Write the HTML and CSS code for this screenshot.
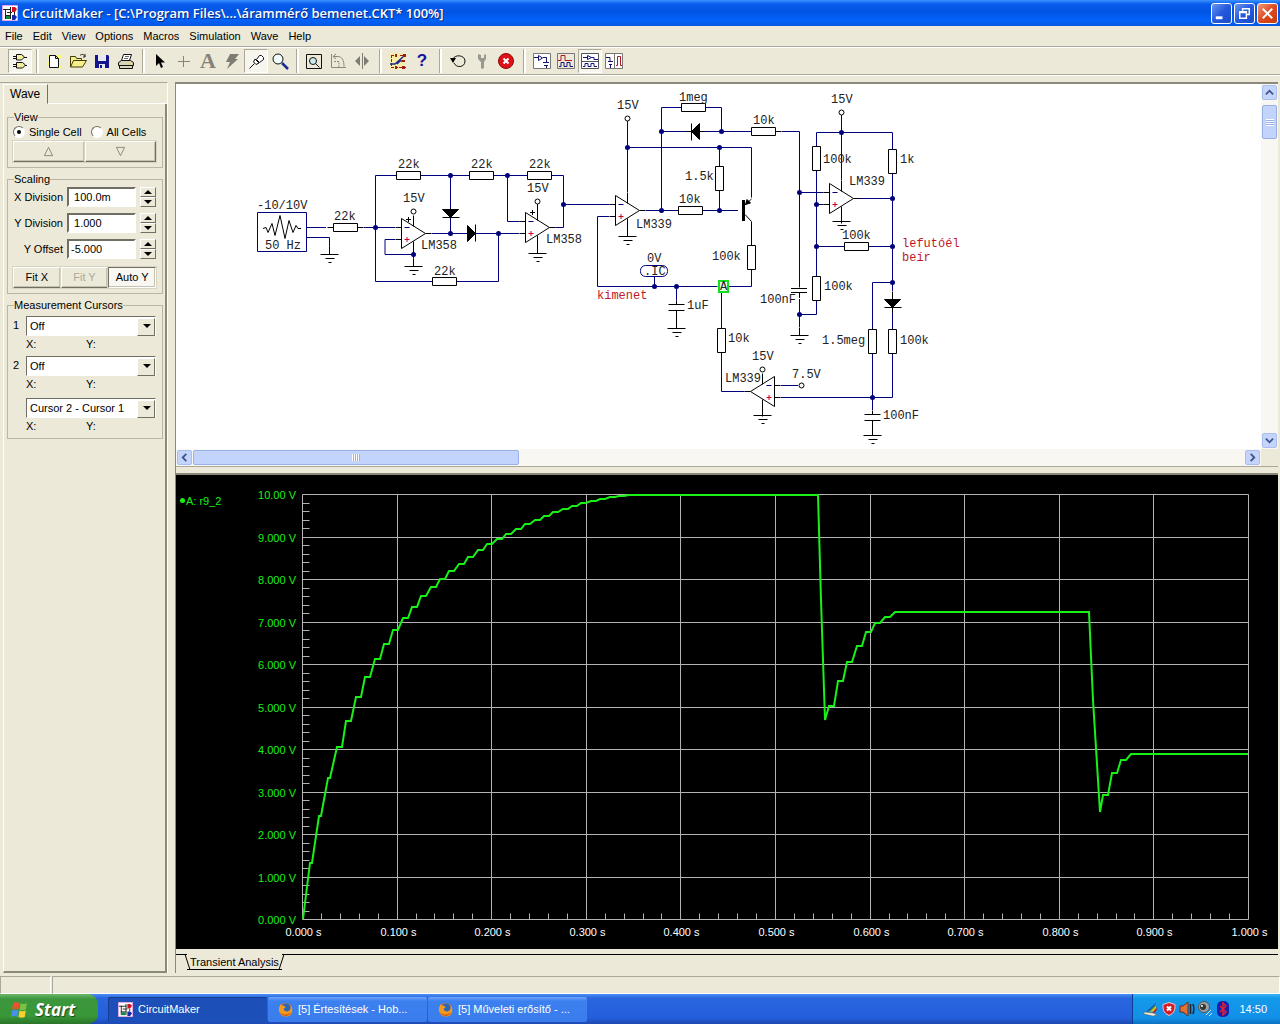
FILE: index.html
```html
<!DOCTYPE html>
<html lang="en">

<head>
  <meta charset="UTF-8">
  <meta name="viewport" content="width=device-width, initial-scale=1.0">
  <title>CircuitMaker</title>
  <link rel="stylesheet" href="styles.css">
</head>

<body>
  <!-- shared shapes -->
  <svg class="defs" aria-hidden="true">
    <symbol id="app" viewBox="0 0 16 16">
      <path fill="#fff" stroke="#e7a9e4" d="M.5 .5h15v15H.5z" />
      <path fill="none" stroke="#222" d="M1 4.500h8M3.500 4v10M3 10.500h6M8.500 2v12M5 7.500h5M12.500 7v3" />
      <path fill="#d01020" d="M10 2h3l2 2-2 3h-3z" />
      <path fill="#1828a8" d="M10 10h3l2 2-2 3h-3z" />
      <path fill="#108838" d="M4 11h4v3H4z" />
    </symbol>
    <symbol id="firefox" viewBox="0 0 16 16">
      <circle cx="8" cy="8" r="7" fill="#e8741a" />
      <circle cx="8.500" cy="6.500" r="5" fill="#2d67b5" />
      <path fill="#f39a1e" d="M1 6l2-4 1 2c2-1 3 0 4 2L6 7c0 3 4 4 6 2 2-1 2-4 1-6 3 3 3 8 0 11-4 3-11 1-12-5z" />
      <path fill="#c8401a" d="M2 10c2 4 8 5 12 1-2 5-10 5-12-1z" />
    </symbol>
    <symbol id="up" viewBox="0 0 10 10"><path fill="none" stroke="#3c5588" stroke-width="2" d="M1 7l4-4 4 4" /></symbol>
    <symbol id="down" viewBox="0 0 10 10"><path fill="none" stroke="#3c5588" stroke-width="2" d="M1 3l4 4 4-4" /></symbol>
    <symbol id="left" viewBox="0 0 10 10"><path fill="none" stroke="#3c5588" stroke-width="2" d="M7 1L3 5l4 4" /></symbol>
    <symbol id="right" viewBox="0 0 10 10"><path fill="none" stroke="#3c5588" stroke-width="2" d="M3 1l4 4-4 4" /></symbol>
    <!-- circuit parts -->
    <g id="res"><path d="M-18 0h36" /><path fill="#fff" d="M-12-4h24v8h-24z" /></g>
    <g id="gnd"><path d="M0-8v8M-9 0h18M-4 4h9M-1 8h3" /></g>
    <g id="cap"><path d="M0-7v4M-8-3h16M-8 3h16M0 3v7" /></g>
    <g id="diode"><path d="M0-12v24M-8 4h17" /><path fill="#000" d="M-8-4h16L0 4z" /></g>
    <g id="pin"><circle r="2.500" fill="#fff" /></g>
    <g id="amp">
      <path fill="#fff" d="M0-15L24 0 0 15z" />
      <path d="M-6-6h6M-6 6h6M24 0h6M12-18v11M12 8v17" />
      <path stroke="#00007c" d="M3-6h5" />
      <path stroke="#d00018" d="M3 6h5M5.500 3.500v5" />
    </g>
  </svg>

  <header class="titlebar">
    <svg class="app-icon"><use href="#app" /></svg>
    <h1>CircuitMaker - [C:\Program Files\...\árammérő bemenet.CKT* 100%]</h1>
    <button class="win-btn" aria-label="Minimize"><svg viewBox="0 0 20 20"><path fill="#fff" d="M4 13h7v3H4z" /></svg></button>
    <button class="win-btn" aria-label="Restore"><svg viewBox="0 0 20 20"><path fill="none" stroke="#fff" stroke-width="1.500" d="M8 7V5h7v6h-3M5 8h7v7H5zM5 9h7" /></svg></button>
    <button class="win-btn close" aria-label="Close"><svg viewBox="0 0 20 20"><path stroke="#fff" stroke-width="2" d="M5 5l10 10M15 5L5 15" /></svg></button>
  </header>

  <nav class="menu">
    <button>File</button>
    <button>Edit</button>
    <button>View</button>
    <button>Options</button>
    <button>Macros</button>
    <button>Simulation</button>
    <button>Wave</button>
    <button>Help</button>
  </nav>

  <div class="toolbar">
    <button class="pressed" aria-label="Parts panel"><svg viewBox="0 0 18 18"><path fill="#f4f0a0" stroke="#111" d="M5.500 2.500h5l3 2.500-3 3h-5zM5.500 10.500h6l3 2.500-3 3h-6z" /><path stroke="#111" d="M2 4.500h3M2 6.500h3M13 5.500h3M2 12.500h3M2 14.500h3M14 13.500h2" /></svg></button>
    <span class="sep narrow"></span>
    <button aria-label="New"><svg viewBox="0 0 18 18"><path fill="#ff6" d="M3 3h3v2H3zM13 3h3v3h-3zM2 10h2v3H2zM13 14h3v2h-3z" /><path fill="#fff" stroke="#111" d="M4.500 3.500h6l3 3v9h-9zM10.500 3.500v3h3" /></svg></button>
    <button aria-label="Open"><svg viewBox="0 0 18 18"><path fill="#f5ef8c" stroke="#443b00" d="M1.500 15V4.500h5l1 2h5v2M1.500 15l3-6.500h13l-4 6.500z" /><path fill="none" stroke="#222" d="M11 3.500c2-2 4-1 5 1M16 2v3h-2" /></svg></button>
    <button aria-label="Save"><svg viewBox="0 0 18 18"><path fill="#14148c" d="M3 3h12l1 1v12H2V3z" /><path fill="#e8e8f0" d="M5 3h8v6H5zM6 12h6v4H6z" /><path fill="#14148c" d="M7 13h2v3H7z" /></svg></button>
    <button aria-label="Print"><svg viewBox="0 0 18 18"><path fill="#fff" stroke="#111" d="M6.500 2.500h8l-2 6h-8z" /><path stroke="#666" d="M8 4.500h4M7 6.500h4" /><path fill="#d8d4b8" stroke="#111" d="M1.500 10.500l3-2h9l3 2v3h-15zM2.500 13.500h13v3h-13z" /><path stroke="#e8d850" d="M11 12h3" /></svg></button>
    <span class="sep narrow"></span>
    <button aria-label="Arrow"><svg viewBox="0 0 18 18"><path d="M5 2v12l3-3 2 5 2-1-2-4.500h4z" /></svg></button>
    <button aria-label="Wire"><svg viewBox="0 0 18 18"><path stroke="#85837a" d="M3 9.500h12M8.500 4v11" /></svg></button>
    <button class="letter" aria-label="Text">A</button>
    <button aria-label="Delete"><svg viewBox="0 0 18 18"><path fill="#7e7c74" d="M7 2h9l-4 5h3L4 17l3-7H3z" /></svg></button>
    <button class="pressed" aria-label="Probe"><svg viewBox="0 0 18 18"><path fill="#fff" stroke="#111" d="M9.500 7.500l3-4h2l2 2v2l-4 3zM8 7l4 4-3 1.500L6.500 10zM7.500 11.500l-5 5" /></svg></button>
    <button aria-label="Zoom"><svg viewBox="0 0 18 18"><circle cx="7" cy="7" r="5" fill="#eefcfc" stroke="#111" /><path stroke="#1a2c90" stroke-width="2.500" d="M11 11l6 6" /></svg></button>
    <span class="sep narrow"></span>
    <button aria-label="Fit"><svg viewBox="0 0 18 18"><path fill="none" stroke="#111" d="M1.500 2.500h15v14h-15z" /><circle cx="8" cy="9" r="3.500" fill="#ccecf0" stroke="#111" /><path stroke="#111" d="M10.500 11.500l4 4" /></svg></button>
    <button aria-label="Rotate"><svg viewBox="0 0 18 18"><path fill="none" stroke="#8b897f" d="M2.500 2v13.500H17M4 4.500h5c4 0 6 4 6 10M7 2L4 4.500 7 7" /><path fill="none" stroke="#8b897f" stroke-dasharray="2 1" d="M5 9.500h5V15" /></svg></button>
    <button aria-label="Mirror"><svg viewBox="0 0 18 18"><path fill="#7e7c74" d="M7 4v10L2 9zM11 4v10l5-5z" /><path stroke="#7e7c74" d="M9.500 1v16" /></svg></button>
    <span class="sep"></span>
    <button aria-label="Check"><svg viewBox="0 0 18 18"><path fill="#fff27a" d="M1 1h16v16H1z" opacity=".5" /><path fill="none" stroke="#a01818" stroke-dasharray="3 1" d="M2.500 3v12M2 3.500h5M11 3.500h6M2 15.500h15" /><path fill="none" stroke="#1a2890" stroke-width="1.500" d="M1 12h5l9-8M8 12l3-3h5" /><path fill="#a01818" d="M6 2h2v3H6zM14 2h3v3h-3zM13 8h3v2h-3zM13 14h3v3h-3zM6 14h2v3H6z" /></svg></button>
    <button class="help" aria-label="Help">?</button>
    <span class="sep"></span>
    <button aria-label="Reset"><svg viewBox="0 0 18 18"><path fill="none" stroke="#111" d="M4 7c2-5 12-4 12 2 0 7-9 7-11 2" /><path d="M1 6h6l-3 5z" /></svg></button>
    <button aria-label="Setup"><svg viewBox="0 0 18 18"><path fill="#9b998f" d="M5 2v5l3 3v6l1 1 2-1v-6l2-3V2l-2 1v3H8V3z" /></svg></button>
    <button aria-label="Stop"><svg viewBox="0 0 18 18"><circle cx="9" cy="9" r="7.500" fill="#e01018" stroke="#8c0808" /><path stroke="#fff" stroke-width="2" d="M6.500 6.500l5 5M11.500 6.500l-5 5" /></svg></button>
    <span class="sep"></span>
    <button aria-label="Schematic window"><svg viewBox="0 0 18 18"><path fill="#fff" stroke="#777" d="M.5 1.500h17v15H.5z" /><path fill="none" stroke="#14146c" d="M1 5.500h4M5.500 3.500v5l4-2.500zM10 5.500h3.500v5M10 10.500h6M11 13.500h4M13.500 13v3" /></svg></button>
    <button aria-label="Waveform window"><svg viewBox="0 0 18 18"><path fill="#ece9d8" stroke="#777" d="M.5 1.500h17v15H.5z" /><path fill="none" stroke="#b01820" d="M1 8.500h3v-5h4v5h7" /><path fill="none" stroke="#14147c" d="M2 14.500h2v-4h3v4h3v-4h3v4h3" /></svg></button>
    <button class="pressed" aria-label="Split horizontally"><svg viewBox="0 0 18 18"><path fill="#fff" stroke="#555" d="M.5 1.500h17v15H.5zM1 9.500h16" /><path fill="none" stroke="#14147c" d="M2 5.500h4M6.500 3.500v4l4-2zM10 5.500h3v2h4M2 14.500h2v-3h3v3h3v-3h3v3h3" /></svg></button>
    <button aria-label="Split vertically"><svg viewBox="0 0 18 18"><path fill="#fff" stroke="#777" d="M.5 1.500h17v15H.5zM9.500 2v14" /><path fill="none" stroke="#14146c" d="M1 5.500h4v4M3 9.500h5M4 12.500h3M5.500 13v3" /><path fill="none" stroke="#b01820" d="M11 13.500h1.500v-9h3v9H17" /></svg></button>
  </div>

  <main class="workspace">
    <aside class="side">
      <div class="side-tabs"><button class="side-tab">Wave</button></div>
      <form class="side-body">
        <fieldset>
          <legend>View</legend>
          <div class="radios">
            <label><input type="radio" name="cells" checked>Single Cell</label>
            <label><input type="radio" name="cells">All Cells</label>
          </div>
          <div class="btn-row">
            <button type="button" aria-label="Previous"><svg viewBox="0 0 12 12"><path d="M6 1.500L10.500 10.500h-9z" /></svg></button>
            <button type="button" aria-label="Next"><svg viewBox="0 0 12 12"><path d="M6 10.500L1.500 1.500h9z" /></svg></button>
          </div>
        </fieldset>

        <fieldset>
          <legend>Scaling</legend>
          <div class="scale-row">
            <label for="xDiv">X Division</label>
            <input id="xDiv" type="text" value=" 100.0m">
            <span class="spin"><button type="button" aria-label="Increase X"></button><button type="button" aria-label="Decrease X"></button></span>
          </div>
          <div class="scale-row">
            <label for="yDiv">Y Division</label>
            <input id="yDiv" type="text" value=" 1.000">
            <span class="spin"><button type="button" aria-label="Increase Y"></button><button type="button" aria-label="Decrease Y"></button></span>
          </div>
          <div class="scale-row">
            <label for="yOff">Y Offset</label>
            <input id="yOff" type="text" value="-5.000">
            <span class="spin"><button type="button" aria-label="Increase offset"></button><button type="button" aria-label="Decrease offset"></button></span>
          </div>
          <div class="btn-row fit">
            <button type="button">Fit X</button>
            <button type="button" disabled>Fit Y</button>
            <button type="button" class="on">Auto Y</button>
          </div>
        </fieldset>

        <fieldset>
          <legend>Measurement Cursors</legend>
          <div class="cursor-row">
            <label for="cur1">1</label>
            <span class="combo"><select id="cur1"><option>Off</option></select></span>
          </div>
          <div class="xy"><span>X:</span><span>Y:</span></div>
          <div class="cursor-row">
            <label for="cur2">2</label>
            <span class="combo"><select id="cur2"><option>Off</option></select></span>
          </div>
          <div class="xy"><span>X:</span><span>Y:</span></div>
          <div class="cursor-row last">
            <span></span>
            <span class="combo"><select aria-label="Difference"><option>Cursor 2 - Cursor 1</option></select></span>
          </div>
          <div class="xy"><span>X:</span><span>Y:</span></div>
        </fieldset>
      </form>
    </aside>

    <section class="docs">
      <div class="schematic">
        <div class="canvas">
          <svg class="circuit" viewBox="176 84 1086 364" width="1086" height="364">
            <g class="part">
              <use href="#res" x="345.500" y="227.500" />
              <use href="#res" x="408.500" y="175.500" />
              <use href="#res" x="481.500" y="175.500" />
              <use href="#res" x="539.500" y="175.500" />
              <use href="#res" x="444.500" y="281.500" />
              <use href="#res" x="690.500" y="210.500" />
              <use href="#res" x="693.500" y="107.500" />
              <use href="#res" x="763.500" y="131.500" />
              <use href="#res" x="856.500" y="246.500" />
              <use href="#res" transform="translate(719.500 178.500) rotate(90)" />
              <use href="#res" transform="translate(751.500 257.500) rotate(90)" />
              <use href="#res" transform="translate(721.500 340.500) rotate(90)" />
              <use href="#res" transform="translate(816.500 158.500) rotate(90)" />
              <use href="#res" transform="translate(892.500 161.500) rotate(90)" />
              <use href="#res" transform="translate(816.500 288.500) rotate(90)" />
              <use href="#res" transform="translate(872.500 341.500) rotate(90)" />
              <use href="#res" transform="translate(892.500 341.500) rotate(90)" />
              <use href="#amp" x="401.500" y="233.500" />
              <use href="#amp" x="525.500" y="227.500" />
              <use href="#amp" x="615.500" y="210.500" />
              <use href="#amp" x="829.500" y="198.500" />
              <use href="#amp" transform="translate(774.500 391.500) scale(-1 1)" />
              <path d="M406 219.500h5M408.500 217v5M530 212.500h5M532.500 210v5" />
              <use href="#pin" x="413.500" y="211.500" />
              <use href="#pin" x="537.500" y="201.500" />
              <path d="M537.500 204v6" />
              <use href="#pin" x="627.500" y="118.500" />
              <use href="#pin" x="841.500" y="112.500" />
              <use href="#pin" x="762.500" y="369.500" />
              <use href="#pin" x="801.500" y="385.500" />
              <use href="#gnd" x="329.500" y="254.500" />
              <use href="#gnd" x="413.500" y="266.500" />
              <use href="#gnd" x="537.500" y="253.500" />
              <use href="#gnd" x="627.500" y="236.500" />
              <use href="#gnd" x="841.500" y="221.500" />
              <use href="#gnd" x="676.500" y="328.500" />
              <use href="#gnd" x="799.500" y="335.500" />
              <use href="#gnd" x="762.500" y="415.500" />
              <use href="#gnd" x="872.500" y="435.500" />
              <use href="#cap" x="676.500" y="307.500" />
              <path d="M676.500 317v4M872.500 426v3" />
              <path d="M791 288.500h16M791 292.500h16M799.500 292v6" />
              <use href="#cap" x="872.500" y="417.500" />
              <use href="#diode" x="450.500" y="213.500" />
              <use href="#diode" x="892.500" y="303.500" />
              <use href="#diode" transform="translate(471.500 233.500) rotate(-90)" />
              <use href="#diode" transform="translate(695.500 131.500) rotate(90)" />
              <path stroke-width="3" d="M743.500 200v21" />
              <path d="M745 205l6.500-6M745 214.500l6.500 7v24" />
              <path fill="#000" d="M745.500 204.500l1.500-5 3.500 3.500z" />
              <path d="M263 228.500l3-1 2 5 4-9 3 12 5-20 5 23 4-18 4 12 3-7 2 3h3" />
            </g>
            <g class="wire">
              <path d="M307 227.500h19M364 227.500h31M375.500 227.500v-52h21M421 175.500h48M494 175.500h33M552 175.500h11.500v52h-8" />
              <path d="M375.500 227.500v54h56M457 281.500h41.500v-48M307 237.500h22.500v9M450.500 175.500v33M450.500 218v15.500M432 233.500h35M476 233.500h43M507.500 175.500v46h12" />
              <path d="M395 239.500h-10v15h28M563.500 204.500h46M609 216.500h-11.500v70h120M729 286.500h22.500v-17M627.500 121v71M627.500 147.500h92v19M719.500 147.500h32v50" />
              <path d="M646 210.500h32M703 210.500h35M661.500 210.500v-103h20M706 107.500h15.500v24M661.500 131.500h24M705 131.500h46M782 131.500h17.500v156M719.500 191v19.500M799.500 192.500h24M721.500 292v36M721.500 353v38.500h23" />
              <path d="M654.500 276v10M676.500 286.500v14M841.500 115v65M816.500 146v-13.500h76v17M816.500 171v105M816.500 301v13.500h-17M816.500 204.500h7M816.500 246.500h28M869 246.500h23" />
              <path d="M799.500 299v28M859 198.500h33M892.500 174v117M892.500 313v16M892.500 354v43.500H781M892.500 282.500h-20v46M872.500 354v56M781 385.500h17" />
              <path d="M257.500 212.500h49v39h-49z" />
              <rect x="640.500" y="265.500" width="27" height="11" rx="5" />
            </g>
            <g class="dot">
              <circle cx="375.500" cy="227.500" r="2.500" /><circle cx="450.500" cy="175.500" r="2.500" /><circle cx="507.500" cy="175.500" r="2.500" />
              <circle cx="563.500" cy="204.500" r="2.500" /><circle cx="450.500" cy="233.500" r="2.500" /><circle cx="498.500" cy="233.500" r="2.500" />
              <circle cx="413.500" cy="254.500" r="2.500" /><circle cx="627.500" cy="147.500" r="2.500" /><circle cx="661.500" cy="131.500" r="2.500" />
              <circle cx="721.500" cy="131.500" r="2.500" /><circle cx="719.500" cy="147.500" r="2.500" /><circle cx="661.500" cy="210.500" r="2.500" />
              <circle cx="719.500" cy="210.500" r="2.500" /><circle cx="654.500" cy="286.500" r="2.500" /><circle cx="676.500" cy="286.500" r="2.500" />
              <circle cx="799.500" cy="192.500" r="2.500" /><circle cx="841.500" cy="132.500" r="2.500" /><circle cx="816.500" cy="204.500" r="2.500" />
              <circle cx="816.500" cy="246.500" r="2.500" /><circle cx="892.500" cy="198.500" r="2.500" /><circle cx="892.500" cy="246.500" r="2.500" />
              <circle cx="892.500" cy="282.500" r="2.500" /><circle cx="799.500" cy="314.500" r="2.500" /><circle cx="872.500" cy="397.500" r="2.500" />
            </g>
            <rect class="probe" x="719" y="281" width="9" height="11" />
            <g class="label">
              <text x="257" y="209">-10/10V</text>
              <text x="265" y="249">50 Hz</text>
              <text x="334" y="220">22k</text>
              <text x="398" y="168">22k</text>
              <text x="471" y="168">22k</text>
              <text x="529" y="168">22k</text>
              <text x="434" y="275">22k</text>
              <text x="403" y="202">15V</text>
              <text x="527" y="192">15V</text>
              <text x="421" y="249">LM358</text>
              <text x="546" y="243">LM358</text>
              <text x="617" y="109">15V</text>
              <text x="679" y="101">1meg</text>
              <text x="753" y="124">10k</text>
              <text x="685" y="180">1.5k</text>
              <text x="679" y="203">10k</text>
              <text x="636" y="228">LM339</text>
              <text x="712" y="260">100k</text>
              <text x="647" y="262">0V</text>
              <text x="644" y="275">.IC</text>
              <text x="720" y="290">A</text>
              <text x="687" y="309">1uF</text>
              <text x="728" y="342">10k</text>
              <text x="752" y="360">15V</text>
              <text x="725" y="382">LM339</text>
              <text x="792" y="378">7.5V</text>
              <text x="831" y="103">15V</text>
              <text x="823" y="163">100k</text>
              <text x="900" y="163">1k</text>
              <text x="849" y="185">LM339</text>
              <text x="842" y="239">100k</text>
              <text x="824" y="290">100k</text>
              <text x="760" y="303">100nF</text>
              <text x="822" y="344">1.5meg</text>
              <text x="900" y="344">100k</text>
              <text x="883" y="419">100nF</text>
              <text class="note" x="597" y="299">kimenet</text>
              <text class="note" x="902" y="247">lefutóél</text>
              <text class="note" x="902" y="261">beír</text>
            </g>
          </svg>
        </div>
        <div class="scroll vert">
          <button aria-label="Scroll up"><svg><use href="#up" /></svg></button>
          <span class="thumb"></span>
          <button aria-label="Scroll down"><svg><use href="#down" /></svg></button>
        </div>
        <div class="scroll horz">
          <button aria-label="Scroll left"><svg><use href="#left" /></svg></button>
          <span class="thumb"></span>
          <button aria-label="Scroll right"><svg><use href="#right" /></svg></button>
        </div>
      </div>

      <div class="wave">
        <svg id="plot" class="plot" viewBox="176 475 1102 474">
          <circle cx="182.500" cy="500.500" r="2.500" fill="#18f018" />
          <text class="volt" x="186" y="505">A: r9_2</text>
        </svg>
      </div>

      <div class="doc-tabs"><button>Transient Analysis</button></div>
    </section>
  </main>

  <div class="status"><span></span><span></span></div>

  <footer class="taskbar">
    <button class="start">
      <svg viewBox="0 0 18 18"><path fill="#e8542c" d="M3 3c2-2 4-1 6 0L8 9C6 8 4 8 2 9z" /><path fill="#7cc142" d="M10 3c2 1 4 1 6 0l-1 6c-2 1-4 1-6 0z" /><path fill="#4a90e8" d="M2 10c2-1 4-1 6 0l-1 6c-2-1-4-1-6 0z" /><path fill="#f8cf30" d="M9 10c2 1 4 1 6 0l-1 6c-2 1-4 1-6 0z" /></svg>
      Start
    </button>
    <button class="task active"><svg><use href="#app" /></svg>CircuitMaker</button>
    <button class="task"><svg><use href="#firefox" /></svg>[5] Értesítések - Hob...</button>
    <button class="task"><svg><use href="#firefox" /></svg>[5] Műveleti erősítő - ...</button>
    <div class="tray">
      <svg viewBox="0 0 16 16"><path fill="#f4f0dc" stroke="#555" stroke-width=".5" d="M1 11l9 1 4 2-4 1-9-2z" /><path fill="#2238b8" d="M3 11L13 2l-3 6z" /><path fill="#30a040" d="M5 11l8-8-1 6z" /><path fill="#e8c020" d="M7 11l6-6v5z" /><path fill="#c82020" d="M9 12l5-6-1 5z" /></svg>
      <svg viewBox="0 0 16 16"><path fill="#d41c2c" stroke="#f4c8cc" d="M8 1.500l6 2c0 5 0 8-6 11-6-3-6-6-6-11z" /><path stroke="#fff" stroke-width="2" d="M6 5.500l4 4M10 5.500l-4 4" /></svg>
      <svg viewBox="0 0 16 16"><path fill="#e0703c" stroke="#6c2c14" d="M1 5h3l5-4v14l-5-4H1z" /><path fill="none" stroke="#222" stroke-width="1.500" d="M11.500 3v10M14 3c1 3 1 7 0 10" /></svg>
      <svg viewBox="0 0 16 16"><circle cx="7" cy="6" r="5.500" fill="#9aa0a4" stroke="#555" /><circle cx="6" cy="6" r="3" fill="#333" /><circle cx="5" cy="5" r="1" fill="#fff" /><path fill="none" stroke="#cfe0f0" d="M9 14l5-5M12 15l3-3" /></svg>
      <svg viewBox="0 0 16 16"><rect x="2" y="0" width="12" height="16" rx="5" fill="#1420b0" /><path fill="none" stroke="#e02030" stroke-width="1.500" d="M5 5l6 6-3 3V2l3 3-6 6" /></svg>
      <time>14:50</time>
    </div>
  </footer>

  <script src="plot.js"></script>
</body>

</html>
```
FILE: styles.css
```css
* {
  margin: 0;
  padding: 0;
  box-sizing: border-box;
}

body {
  display: flex;
  flex-direction: column;
  min-height: 100vh;
  background-color: #ece9d8;
  color: #000;
  font-family: "Liberation Sans", Arial, sans-serif;
  font-size: 11px;
  line-height: 13px;
}

button,
input,
select {
  font: inherit;
  color: inherit;
}

button {
  border: none;
  background: none;
}

svg {
  display: block;
}

.defs {
  position: absolute;
  width: 0;
  height: 0;
}

/* title bar */
.titlebar {
  display: flex;
  align-items: center;
  gap: 2px;
  height: 26px;
  padding: 0 2px;
  background: linear-gradient(#3a93ff 0, #0a5cec 4px, #0054e3 12px, #0262fa 20px, #0458e0 100%);
  color: #fff;
}

.app-icon {
  width: 16px;
  height: 16px;
}

h1 {
  flex: 1;
  padding-left: 2px;
  font-family: "Open Sans", sans-serif;
  font-size: 13px;
  font-weight: 600;
  line-height: 24px;
  text-shadow: 1px 1px #0a2a80;
}

.win-btn {
  width: 21px;
  height: 21px;
  border: 1px solid #fff;
  border-radius: 3px;
  background: linear-gradient(135deg, #6b95f2, #2459dc 50%, #1c4cc8);
}

.win-btn.close {
  background: linear-gradient(135deg, #f0987c, #de4a20 50%, #c43a10);
}

/* menu and toolbar */
.menu {
  display: flex;
  gap: 10px;
  height: 20px;
  padding: 0 5px;
}

.menu button {
  line-height: 18px;
}

.toolbar {
  display: flex;
  align-items: center;
  height: 29px;
  padding: 0 8px;
  border-top: 1px solid #aca899;
  border-bottom: 1px solid #aca899;
  box-shadow: inset 0 1px #fff, 0 1px #fff;
}

.toolbar button {
  display: grid;
  place-items: center;
  width: 24px;
  height: 24px;
}

.toolbar svg {
  width: 18px;
  height: 18px;
}

.toolbar .pressed {
  border: 1px solid;
  border-color: #aca899 #fff #fff #aca899;
  background-color: #f6f5ee;
}

.toolbar .letter {
  font-family: "Liberation Serif", serif;
  font-size: 22px;
  font-weight: bold;
  color: #85837a;
}

.toolbar .help {
  font-size: 17px;
  font-weight: bold;
  color: #14149c;
}

.sep {
  display: grid;
  place-items: center;
  width: 12px;
}

.sep.narrow {
  width: 10px;
}

.sep::before {
  content: "";
  width: 2px;
  height: 24px;
  border-left: 1px solid #aca899;
  background-color: #fff;
}

/* workspace */
.workspace {
  flex: 1;
  display: flex;
  gap: 7px;
  margin-top: 7px;
  padding-bottom: 3px;
}

.side {
  display: flex;
  flex-direction: column;
  width: 168px;
  padding: 1px 0 0 3px;
  border-top: 1px solid #aca899;
  border-right: 1px solid #fff;
}

.side-tabs {
  display: flex;
}

.side-tabs::after {
  content: "";
  flex: 1;
  border-bottom: 1px solid #fff;
}

.side-tab {
  width: 45px;
  height: 20px;
  border: 1px solid;
  border-color: #fff #716f64 transparent #fff;
  font-size: 12px;
  text-align: left;
  padding-left: 6px;
}

.side-body {
  flex: 1;
  padding: 7px 2px 4px 3px;
  border-left: 1px solid #fff;
  border-right: 2px solid #8b897c;
  border-bottom: 2px solid #8b897c;
}

fieldset {
  display: block;
  padding: 0 6px 5px 5px;
  margin-bottom: 5px;
  border: 1px solid #b9b6a4;
}

legend {
  margin-left: 1px;
  line-height: 12px;
}

.radios {
  display: flex;
  gap: 9px;
  height: 18px;
}

.radios label {
  display: flex;
  align-items: center;
  gap: 4px;
}

.radios input {
  appearance: none;
  display: grid;
  place-items: center;
  width: 12px;
  height: 12px;
  border: 1px solid;
  border-color: #716f64 #fff #fff #716f64;
  border-radius: 50%;
  background-color: #fff;
}

.radios input:checked::before {
  content: "";
  width: 4px;
  height: 4px;
  border-radius: 50%;
  background-color: #000;
}

.btn-row {
  display: flex;
}

.btn-row button {
  flex: 1;
  display: grid;
  place-items: center;
  height: 21px;
  border: 1px solid;
  border-color: #fff #716f64 #716f64 #fff;
  box-shadow: inset -1px -1px #c5c2b0, 0 0 0 1px #d8d4c2;
}

.btn-row svg {
  width: 11px;
  height: 11px;
  fill: none;
  stroke: #85837a;
}

.btn-row.fit {
  margin-top: 8px;
}

.btn-row button:disabled {
  color: #aca899;
}

.btn-row .on {
  border-color: #716f64 #fff #fff #716f64;
  background-color: #f8f7f2;
}

.scale-row {
  display: grid;
  grid-template-columns: 50px 1fr 16px;
  gap: 4px;
  align-items: center;
  margin-top: 6px;
}

.scale-row:nth-of-type(1) {
  margin-top: 2px;
}

.scale-row label {
  text-align: right;
  white-space: nowrap;
}

.scale-row input {
  width: 100%;
  height: 20px;
  padding-left: 2px;
  border: 2px solid;
  border-color: #716f64 #fff #fff #716f64;
  background-color: #fff;
  white-space: pre;
}

.spin {
  display: grid;
}

.spin button {
  display: grid;
  place-items: center;
  height: 10px;
  border: 1px solid;
  border-color: #fff #716f64 #716f64 #fff;
}

.spin button::before {
  content: "";
  border: 4px solid transparent;
  border-top: none;
  border-bottom: 4px solid #000;
}

.spin button:last-child::before {
  border-top: 4px solid #000;
  border-bottom: none;
}

.cursor-row {
  display: grid;
  grid-template-columns: 9px 1fr;
  gap: 4px;
  margin-top: 5px;
}

.cursor-row label {
  line-height: 18px;
}

.cursor-row.last {
  margin-top: 7px;
}

.combo {
  position: relative;
}

.combo select {
  appearance: none;
  display: block;
  width: 100%;
  height: 20px;
  padding-left: 3px;
  border: 1px solid;
  border-color: #716f64 #fff #fff #716f64;
  border-radius: 0;
  background-color: #fff;
}

.combo::before {
  content: "";
  position: absolute;
  top: 2px;
  right: 1px;
  width: 16px;
  height: 16px;
  border: 1px solid;
  border-color: #fff #716f64 #716f64 #fff;
  background-color: #ece9d8;
  pointer-events: none;
}

.combo::after {
  content: "";
  position: absolute;
  top: 8px;
  right: 5px;
  border: 4px solid transparent;
  border-top-color: #000;
  border-bottom: none;
  pointer-events: none;
}

.xy {
  display: grid;
  grid-template-columns: 60px 1fr;
  padding: 2px 0 0 13px;
}

/* documents */
.docs {
  flex: 1;
  display: flex;
  flex-direction: column;
  min-width: 0;
  margin-right: 2px;
  border-top: 2px solid #8b897c;
  border-left: 1px solid #8b897c;
}

.schematic {
  flex: 1;
  display: grid;
  grid-template: 1fr 17px / 1fr 17px;
  min-height: 240px;
  border-bottom: 1px solid #aca899;
}

.canvas {
  position: relative;
  overflow: hidden;
  background-color: #fff;
}

.circuit {
  max-width: none;
}

.wire {
  fill: none;
  stroke: #00007c;
}

.part {
  fill: none;
  stroke: #000;
}

.dot {
  fill: #00007c;
}

.probe {
  fill: #e8ffe8;
  stroke: #10e020;
  stroke-width: 2;
}

.label {
  font-family: "Liberation Mono", "Courier New", monospace;
  font-size: 12px;
  fill: #222;
}

.label .note {
  fill: #c01828;
}

.scroll {
  display: flex;
  background-color: #f8f7f1;
}

.scroll.vert {
  flex-direction: column;
}

.scroll button {
  display: grid;
  place-items: center;
  width: 15px;
  height: 15px;
  margin: 1px;
  border: 1px solid #a9bdf0;
  border-radius: 2px;
  background-color: #c4d4fb;
}

.scroll button svg {
  width: 9px;
  height: 9px;
}

.scroll button:last-child {
  margin-left: auto;
}

.scroll.vert button:last-child {
  margin-top: auto;
  margin-left: 1px;
}

.thumb {
  display: grid;
  place-items: center;
  border: 1px solid #9ab0e4;
  border-radius: 2px;
  background-color: #c2d3fc;
}

.vert .thumb {
  width: 15px;
  height: 34px;
  margin: 4px 1px;
}

.horz .thumb {
  width: 30%;
  height: 15px;
  margin: 1px 0;
}

.thumb::before {
  content: "";
  width: 8px;
  height: 7px;
  background: repeating-linear-gradient(#fff 0 1px, #9ab0e4 1px 2px);
}

.horz .thumb::before {
  background: repeating-linear-gradient(90deg, #fff 0 1px, #9ab0e4 1px 2px);
}

.wave {
  margin-top: 6px;
  border-top: 2px solid #8b897c;
  background-color: #000;
}

.plot {
  width: 100%;
  height: auto;
  font-size: 11px;
}

.grid {
  fill: none;
  stroke: #b4b4b4;
}

.trace {
  fill: none;
  stroke: #18f018;
  stroke-width: 2;
}

.volt {
  fill: #18f018;
}

.time {
  fill: #fff;
  text-anchor: middle;
}

.volt.axis {
  text-anchor: end;
}

.doc-tabs {
  display: flex;
  height: 24px;
  padding: 5px 0 2px;
}

.doc-tabs::before {
  content: "";
  width: 11px;
  border-top: 1px solid #000;
}

.doc-tabs::after {
  content: "";
  flex: 1;
  border-top: 1px solid #000;
}

.doc-tabs button {
  display: flex;
  height: 16px;
  border-bottom: 1px solid #000;
  line-height: 16px;
}

.doc-tabs button::before,
.doc-tabs button::after {
  content: "";
  width: 2px;
  height: 16px;
  border-left: 1px solid #000;
  transform: skewX(18deg);
}

.doc-tabs button::after {
  border-left: none;
  border-right: 1px solid #000;
  transform: skewX(-18deg);
}

/* status bar */
.status {
  display: grid;
  grid-template-columns: 51px 1fr;
  gap: 1px;
  height: 18px;
}

.status span {
  border: 1px solid;
  border-color: #aca899 #fff #fff #aca899;
}

/* task bar */
.taskbar {
  display: flex;
  align-items: center;
  gap: 1px;
  height: 30px;
  background: linear-gradient(#4a90f4 0, #2a66e0 4px, #245edb 24px, #1c48b0 100%);
  color: #fff;
}

.start {
  display: flex;
  align-items: center;
  gap: 6px;
  width: 98px;
  height: 30px;
  margin-right: 9px;
  padding-left: 10px;
  border-radius: 0 10px 10px 0;
  background: linear-gradient(#6cb868 0, #3c963c 5px, #389838 22px, #2a7428 100%);
  font-family: "Open Sans", sans-serif;
  font-size: 17px;
  font-style: italic;
  font-weight: bold;
  text-shadow: 1px 1px 1px #1c4a1c;
}

.start svg {
  width: 19px;
  height: 19px;
}

.task {
  display: flex;
  align-items: center;
  gap: 5px;
  width: 159px;
  height: 25px;
  padding-left: 10px;
  border-radius: 2px;
  background: linear-gradient(#6ea4fa 0, #3c80f0 4px, #3a7cec 100%);
  white-space: nowrap;
}

.task.active {
  background: #1c50b8;
  box-shadow: inset 1px 1px #163c90;
}

.task svg {
  width: 15px;
  height: 15px;
}

.tray {
  display: flex;
  align-items: center;
  gap: 2px;
  height: 30px;
  margin-left: auto;
  padding: 0 13px 0 10px;
  border-left: 1px solid #0c3c90;
  background: linear-gradient(#3cb4f8 0, #149ae8 4px, #1290e8 24px, #0c70c0 100%);
}

.tray svg {
  width: 16px;
  height: 16px;
}

.tray time {
  margin-left: 6px;
}
```
FILE: plot.js
```html
const plot = document.getElementById('plot')

// plot area in viewBox units
const left = 302.5
const right = 1248.5
const top0 = 494.5
const bottom = 919.5

function add(tag, attrs, text) {
  const el = document.createElementNS('http://www.w3.org/2000/svg', tag)
  for (const key in attrs) el.setAttribute(key, attrs[key])
  if (text) el.textContent = text
  plot.appendChild(el)
}

let grid = ''
for (let i = 0; i <= 10; i++) {
  const x = Math.floor(left + i * 94.6) + 0.5
  const y = Math.floor(bottom - i * 42.5) + 0.5
  grid += `M${x} ${top0}V${bottom}M${left} ${y}H${right}`
  add('text', { class: 'time', x: x + 1, y: 936 }, (i / 10).toFixed(3) + ' s')
  add('text', { class: 'volt axis', x: 296, y: y + 4 }, i === 10 ? '10.00 V' : i.toFixed(3) + ' V')
}

// minor ticks
for (let i = 1; i < 50; i++) {
  const x = Math.floor(left + i * 18.92) + 0.5
  const y = Math.floor(bottom - i * 8.5) + 0.5
  grid += `M${x} ${bottom}v-6M${left} ${y}h7`
}
add('path', { class: 'grid', d: grid })

// the capacitor charges in steps, [x, y] is where each step starts
const start = [[310, 863], [319, 816], [328, 778]]
const charge = [
  [337, 747], [346, 721], [356, 697], [365, 677], [375, 659],
  [384, 644], [393, 630], [403, 618], [412, 607], [421, 596], [431, 587], [440, 579], [449, 571],
  [459, 564], [468, 557], [478, 550], [487, 544], [497, 539], [506, 534], [516, 529], [525, 524],
  [535, 520], [544, 516], [553, 512], [563, 509], [572, 506], [581, 503], [591, 501], [600, 499],
  [610, 497], [619, 496]
]
const second = [[829, 706], [838, 681], [847, 662], [857, 646], [866, 632], [875, 623], [885, 617]]
const third = [[1103, 795], [1112, 773], [1121, 760]]

const steps = (list, width = 5) => list.map(([x, y]) => `L${x} ${y}h${width}`).join('')

add('path', {
  class: 'trace',
  d: 'M303 919' + steps(start, 2) + steps(charge) + 'L629 495H818L821 600L825 720' +
    steps(second) + 'L895 612H1089L1093 700L1100 812' +
    steps(third) + 'L1131 754H1248'
})
```
